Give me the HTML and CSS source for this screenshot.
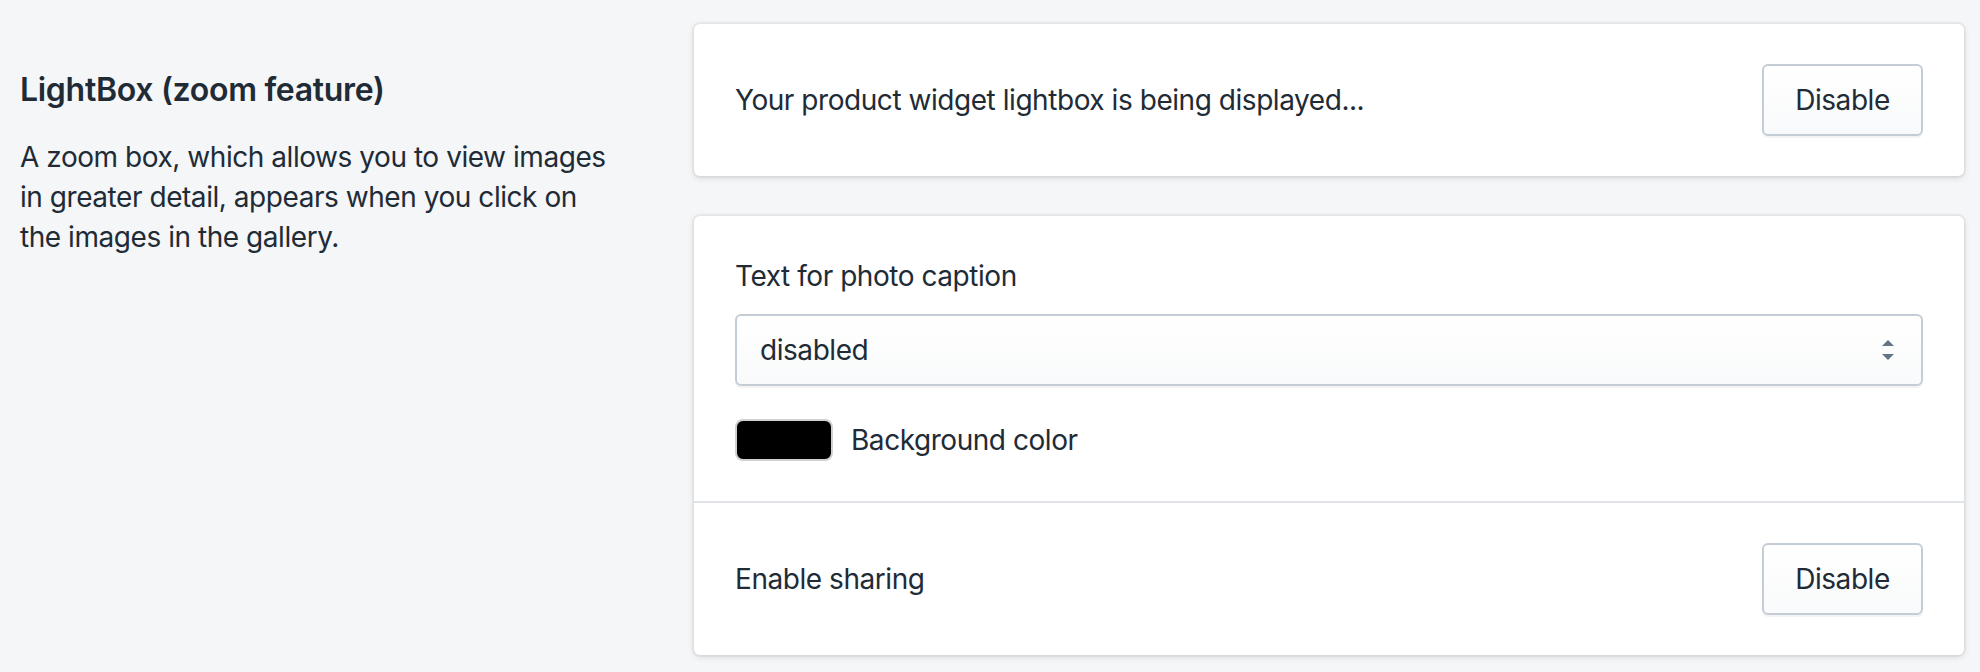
FILE: index.html
```html
<!DOCTYPE html>
<html lang="en">
<head>
<meta charset="utf-8">
<title>LightBox settings</title>
<link rel="stylesheet" href="styles.css">
</head>
<body>
<div class="page">
  <div class="annotation">
    <h2 class="heading">LightBox (zoom feature)</h2>
    <p class="description">A zoom box, which allows you to view images in greater detail, appears when you click on the images in the gallery.</p>
  </div>
  <div class="content">
    <div class="card">
      <div class="section row">
        <span>Your product widget lightbox is being displayed...</span>
        <button class="btn" type="button">Disable</button>
      </div>
    </div>
    <div class="card">
      <div class="section">
        <div class="label">Text for photo caption</div>
        <div class="select">
          <span>disabled</span>
          <svg class="arrows" width="12" height="20" viewBox="0 0 12 20" aria-hidden="true">
            <path d="M6 0 L12 6 L0 6 Z" fill="#637381"/>
            <path d="M0 14 L12 14 L6 20 Z" fill="#637381"/>
          </svg>
        </div>
        <div class="color-row">
          <span class="swatch"></span>
          <span>Background color</span>
        </div>
      </div>
      <div class="section row divided">
        <span>Enable sharing</span>
        <button class="btn" type="button">Disable</button>
      </div>
    </div>
  </div>
</div>
</body>
</html>
```
FILE: styles.css
```css
html, body {
  margin: 0;
  padding: 0;
  background: #f4f6f8;
}
body {
  font-family: "Inter", "Liberation Sans", sans-serif;
  font-size: 28px;
  line-height: 40px;
  letter-spacing: -0.45px;
  color: #212b36;
}
.page {
  display: flex;
  gap: 40px;
  padding: 24px 16px 16px 20px;
}
.annotation {
  flex: 0 0 634px;
  padding-top: 42px;
}
.heading {
  margin: 0;
  font-size: 32px;
  line-height: 48px;
  font-weight: 600;
  letter-spacing: -0.3px;
}
.description {
  margin: 23px 0 0;
  max-width: 600px;
}
.content {
  flex: 1 1 auto;
  display: flex;
  flex-direction: column;
  gap: 40px;
}
.card {
  background: #fff;
  border-radius: 6px;
  box-shadow: 0 0 0 2px rgba(63, 63, 68, 0.05), 0 2px 6px 0 rgba(63, 63, 68, 0.15);
}
.section {
  padding: 40px 41px;
}
.row {
  display: flex;
  align-items: center;
  justify-content: space-between;
}
.divided {
  border-top: 2px solid #dfe3e8;
}
.btn {
  height: 72px;
  min-width: 161px;
  padding: 0 30px;
  font: inherit;
  letter-spacing: inherit;
  color: #212b36;
  background: linear-gradient(180deg, #fff, #f9fafb);
  border: 2px solid #c4cdd5;
  border-radius: 6px;
  box-shadow: 0 2px 0 0 rgba(22, 29, 37, 0.05);
}
.label {
  margin-bottom: 18px;
}
.select {
  height: 72px;
  box-sizing: border-box;
  display: flex;
  align-items: center;
  justify-content: space-between;
  padding: 0 27px 0 23px;
  background: linear-gradient(180deg, #fff, #f9fafb);
  border: 2px solid #c4cdd5;
  border-radius: 6px;
  box-shadow: 0 2px 0 0 rgba(22, 29, 37, 0.05);
}
.arrows {
  display: block;
}
.color-row {
  display: flex;
  align-items: center;
  gap: 18px;
  margin-top: 33px;
}
.swatch {
  width: 98px;
  height: 42px;
  box-sizing: border-box;
  background: #000;
  border: 2px solid #cfd2d4;
  border-radius: 8px;
}
```
